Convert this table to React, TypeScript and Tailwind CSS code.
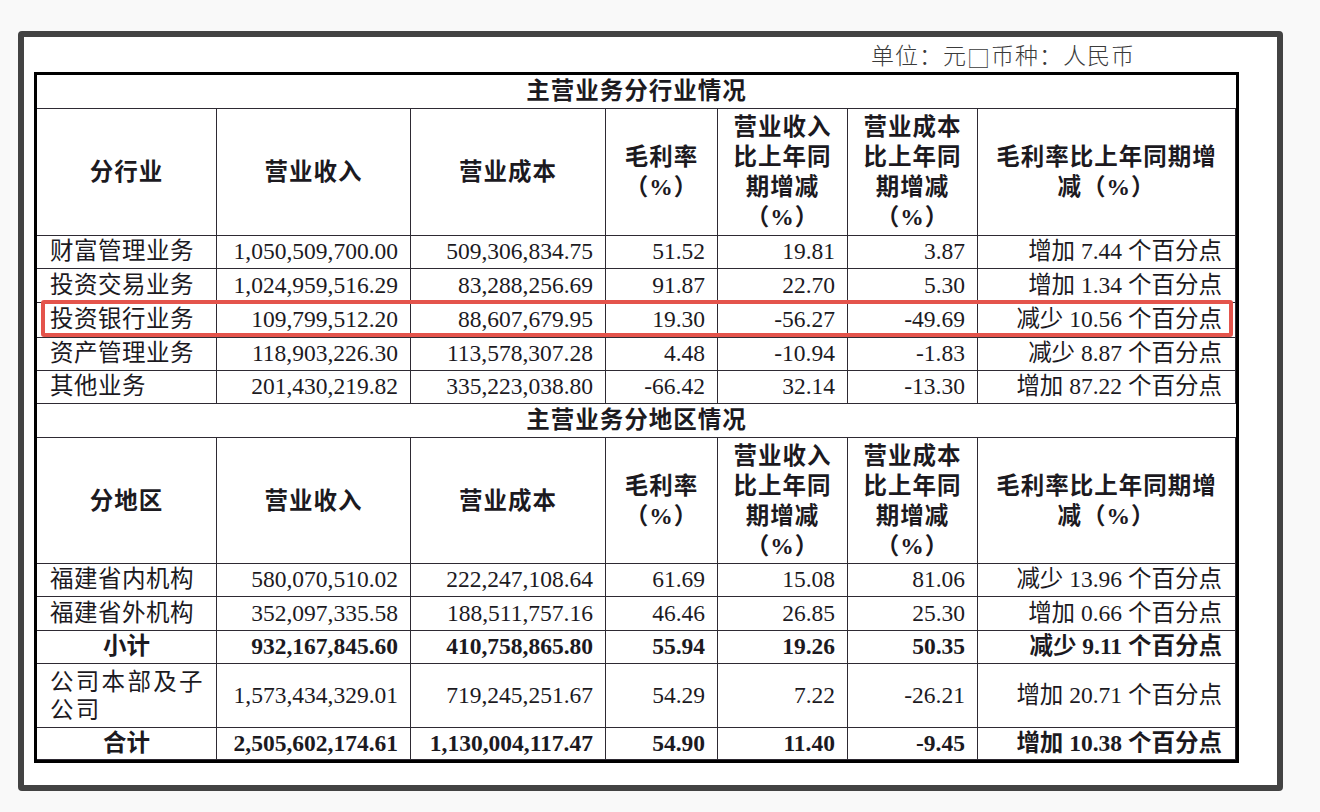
const FONT = "font-['Liberation_Serif','Noto_Sans_CJK_SC',serif]"

const COLS = [180, 194, 195, 112, 130, 130, 258]

type Row = { label: string; cells: string[]; bold?: boolean; h: number; lines?: string[] }

const INDUSTRY: Row[] = [
  { label: '财富管理业务', cells: ['1,050,509,700.00', '509,306,834.75', '51.52', '19.81', '3.87', '增加 7.44 个百分点'], h: 33 },
  { label: '投资交易业务', cells: ['1,024,959,516.29', '83,288,256.69', '91.87', '22.70', '5.30', '增加 1.34 个百分点'], h: 34 },
  { label: '投资银行业务', cells: ['109,799,512.20', '88,607,679.95', '19.30', '-56.27', '-49.69', '减少 10.56 个百分点'], h: 35 },
  { label: '资产管理业务', cells: ['118,903,226.30', '113,578,307.28', '4.48', '-10.94', '-1.83', '减少 8.87 个百分点'], h: 33 },
  { label: '其他业务', cells: ['201,430,219.82', '335,223,038.80', '-66.42', '32.14', '-13.30', '增加 87.22 个百分点'], h: 33 },
]

const REGION: Row[] = [
  { label: '福建省内机构', cells: ['580,070,510.02', '222,247,108.64', '61.69', '15.08', '81.06', '减少 13.96 个百分点'], h: 33 },
  { label: '福建省外机构', cells: ['352,097,335.58', '188,511,757.16', '46.46', '26.85', '25.30', '增加 0.66 个百分点'], h: 34 },
  { label: '小计', cells: ['932,167,845.60', '410,758,865.80', '55.94', '19.26', '50.35', '减少 9.11 个百分点'], bold: true, h: 33 },
  { label: '', lines: ['公司本部及子', '公司'], cells: ['1,573,434,329.01', '719,245,251.67', '54.29', '7.22', '-26.21', '增加 20.71 个百分点'], h: 64 },
  { label: '合计', cells: ['2,505,602,174.61', '1,130,004,117.47', '54.90', '11.40', '-9.45', '增加 10.38 个百分点'], bold: true, h: 32 },
]

const cell = 'border-r-[1.5px] border-b-[1.5px] border-[#2e2a33] p-0'

function TitleRow({ text }: { text: string }) {
  return (
    <tr className="h-[34px]">
      <td colSpan={7} className="border-b-[1.5px] border-[#2e2a33] p-0 text-center font-bold tracking-[1px]">
        {text}
      </td>
    </tr>
  )
}

function HeaderRow({ first, h }: { first: string; h: number }) {
  const heads: string[][] = [
    [first],
    ['营业收入'],
    ['营业成本'],
    ['毛利率', '（%）'],
    ['营业收入', '比上年同', '期增减', '（%）'],
    ['营业成本', '比上年同', '期增减', '（%）'],
    ['毛利率比上年同期增', '减（%）'],
  ]
  return (
    <tr style={{ height: h }}>
      {heads.map((lines, i) => (
        <td key={i} className={`${cell} ${i === 6 ? 'border-r-0' : ''} text-center align-middle font-bold leading-[30px] tracking-[1px]`}>
          {lines.map((l, j) => (
            <div key={j}>{l}</div>
          ))}
        </td>
      ))}
    </tr>
  )
}

function DataRow({ row, last }: { row: Row; last?: boolean }) {
  const b = last ? 'border-b-0' : ''
  return (
    <tr style={{ height: row.h }}>
      <td className={`${cell} ${b} ${row.bold ? 'text-center font-bold' : 'pl-[13px] text-left tracking-[0.5px]'}`}>
        {row.lines ? (
          <div className="leading-[28px] tracking-[2.3px]">
            {row.lines.map((l) => (
              <div key={l}>{l}</div>
            ))}
          </div>
        ) : (
          row.label
        )}
      </td>
      {row.cells.map((c, i) => (
        <td
          key={i}
          className={`${cell} ${b} ${i === 5 ? 'border-r-0 pr-[13px]' : 'pr-[12px]'} text-right whitespace-nowrap ${row.bold ? 'font-bold' : ''}`}
        >
          {c}
        </td>
      ))}
    </tr>
  )
}

export default function App() {
  return (
    <div className="w-[1320px] h-[812px] bg-[#f9f9f9] pt-[31px] pl-[18px]">
      <div className="w-[1265px] h-[760px] rounded-[4px] border-[6px] border-[#434343] bg-white pl-[10px]">
        <div className={`${FONT} flex h-[35px] items-end justify-end pr-[142px] text-[23px] font-light leading-[30px] tracking-[1px] text-[#3a3a3a]`}>
          单位：元<span className="font-['Noto_Sans_CJK_SC',sans-serif]">□</span>币种：人民币
        </div>
        <div className="relative w-[1205px]">
          <table className={`${FONT} w-[1205px] table-fixed border-separate border-spacing-0 border-[3px] border-black text-[23.5px] leading-none text-[#1c1a1f]`}>
            <colgroup>
              {COLS.map((w, i) => (
                <col key={i} style={{ width: w }} />
              ))}
            </colgroup>
            <tbody>
              <TitleRow text="主营业务分行业情况" />
              <HeaderRow first="分行业" h={127} />
              {INDUSTRY.map((r) => (
                <DataRow key={r.label} row={r} />
              ))}
              <TitleRow text="主营业务分地区情况" />
              <HeaderRow first="分地区" h={126} />
              {REGION.map((r, i) => (
                <DataRow key={i} row={r} last={i === REGION.length - 1} />
              ))}
            </tbody>
          </table>
          <div className="pointer-events-none absolute left-[7px] top-[228px] h-[37px] w-[1192px] rounded-[3px] border-[4px] border-[#e4544c]" />
        </div>
      </div>
    </div>
  )
}
